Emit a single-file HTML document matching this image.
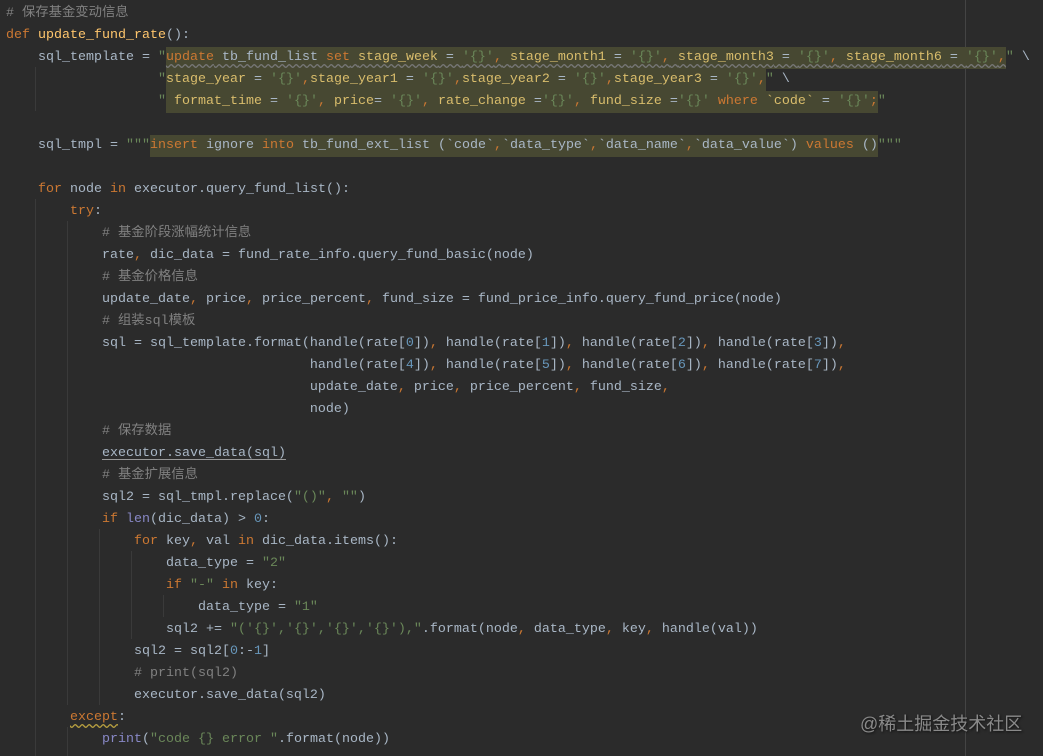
<!DOCTYPE html>
<html><head><meta charset="utf-8"><style>
html,body{margin:0;padding:0;background:#2b2b2b;width:1043px;height:756px;overflow:hidden;position:relative}
.code{position:absolute;left:6px;top:3px;font-family:"Liberation Mono","Noto Sans CJK SC",monospace;font-size:13.33px;color:#a9b7c6}
.l{height:22px;line-height:22px;white-space:pre;overflow:visible}
.k{color:#cc7832}.f{color:#ffc66d}.s{color:#6a8759}.c{color:#808080}.n{color:#6897bb}.b{color:#8888c6}
.i{background:#474832;display:inline-block;height:22px;vertical-align:top}
.y{color:#d9bd6c}
.w{text-decoration:underline wavy #777;text-underline-offset:3px}
.g{position:absolute;width:1px;background:#3a3a3a}
</style></head><body>
<div class="g" style="left:965px;top:0;height:756px;background:#444"></div>
<div class="g" style="left:35px;top:67px;height:44px"></div>
<div class="g" style="left:35px;top:199px;height:557px"></div>
<div class="g" style="left:67px;top:221px;height:484px"></div>
<div class="g" style="left:67px;top:727px;height:29px"></div>
<div class="g" style="left:99px;top:529px;height:176px"></div>
<div class="g" style="left:131px;top:551px;height:88px"></div>
<div class="g" style="left:163px;top:595px;height:22px"></div>
<div class="code"><div class="l c"># 保存基金变动信息</div><div class="l"><span class="k">def</span> <span class="f">update_fund_rate</span>():</div><div class="l">    sql_template = <span class="s">"</span><span class="i w"><span class="k">update</span> tb_fund_list <span class="k">set</span> <span class="y">stage_week</span> = <span class="s">'{}'</span><span class="k">,</span> <span class="y">stage_month1</span> = <span class="s">'{}'</span><span class="k">,</span> <span class="y">stage_month3</span> = <span class="s">'{}'</span><span class="k">,</span> <span class="y">stage_month6</span> = <span class="s">'{}'</span><span class="k">,</span></span><span class="s">"</span> \</div><div class="l">                   <span class="s">"</span><span class="i"><span class="y">stage_year</span> = <span class="s">'{}'</span><span class="k">,</span><span class="y">stage_year1</span> = <span class="s">'{}'</span><span class="k">,</span><span class="y">stage_year2</span> = <span class="s">'{}'</span><span class="k">,</span><span class="y">stage_year3</span> = <span class="s">'{}'</span><span class="k">,</span></span><span class="s">"</span> \</div><div class="l">                   <span class="s">"</span><span class="i"> <span class="y">format_time</span> = <span class="s">'{}'</span><span class="k">,</span> <span class="y">price</span>= <span class="s">'{}'</span><span class="k">,</span> <span class="y">rate_change</span> =<span class="s">'{}'</span><span class="k">,</span> <span class="y">fund_size</span> =<span class="s">'{}'</span> <span class="k">where</span> <span class="y">`code`</span> = <span class="s">'{}'</span><span class="k">;</span></span><span class="s">"</span></div><div class="l"> </div><div class="l">    sql_tmpl = <span class="s">"""</span><span class="i"><span class="k">insert</span> ignore <span class="k">into</span> tb_fund_ext_list (`code`<span class="k">,</span>`data_type`<span class="k">,</span>`data_name`<span class="k">,</span>`data_value`) <span class="k">values</span> ()</span><span class="s">"""</span></div><div class="l"> </div><div class="l">    <span class="k">for</span> node <span class="k">in</span> executor.query_fund_list():</div><div class="l">        <span class="k">try</span>:</div><div class="l c">            # 基金阶段涨幅统计信息</div><div class="l">            rate<span class="k">,</span> dic_data = fund_rate_info.query_fund_basic(node)</div><div class="l c">            # 基金价格信息</div><div class="l">            update_date<span class="k">,</span> price<span class="k">,</span> price_percent<span class="k">,</span> fund_size = fund_price_info.query_fund_price(node)</div><div class="l c">            # 组装sql模板</div><div class="l">            sql = sql_template.format(handle(rate[<span class="n">0</span>])<span class="k">,</span> handle(rate[<span class="n">1</span>])<span class="k">,</span> handle(rate[<span class="n">2</span>])<span class="k">,</span> handle(rate[<span class="n">3</span>])<span class="k">,</span></div><div class="l">                                      handle(rate[<span class="n">4</span>])<span class="k">,</span> handle(rate[<span class="n">5</span>])<span class="k">,</span> handle(rate[<span class="n">6</span>])<span class="k">,</span> handle(rate[<span class="n">7</span>])<span class="k">,</span></div><div class="l">                                      update_date<span class="k">,</span> price<span class="k">,</span> price_percent<span class="k">,</span> fund_size<span class="k">,</span></div><div class="l">                                      node)</div><div class="l c">            # 保存数据</div><div class="l">            <span style="text-decoration:underline #999;text-underline-offset:3px">executor.save_data(sql)</span></div><div class="l c">            # 基金扩展信息</div><div class="l">            sql2 = sql_tmpl.replace(<span class="s">"()"</span><span class="k">,</span> <span class="s">""</span>)</div><div class="l">            <span class="k">if</span> <span class="b">len</span>(dic_data) &gt; <span class="n">0</span>:</div><div class="l">                <span class="k">for</span> key<span class="k">,</span> val <span class="k">in</span> dic_data.items():</div><div class="l">                    data_type = <span class="s">"2"</span></div><div class="l">                    <span class="k">if</span> <span class="s">"-"</span> <span class="k">in</span> key:</div><div class="l">                        data_type = <span class="s">"1"</span></div><div class="l">                    sql2 += <span class="s">"('{}','{}','{}','{}'),"</span>.format(node<span class="k">,</span> data_type<span class="k">,</span> key<span class="k">,</span> handle(val))</div><div class="l">                sql2 = sql2[<span class="n">0</span>:-<span class="n">1</span>]</div><div class="l c">                # print(sql2)</div><div class="l">                executor.save_data(sql2)</div><div class="l">        <span class="k w" style="text-decoration-color:#b8a040">except</span>:</div><div class="l">            <span class="b">print</span>(<span class="s">"code {} error "</span>.format(node))</div></div>
<div style="position:absolute;left:860px;top:710px;font-family:'Liberation Sans','Noto Sans CJK SC',sans-serif;font-size:18px;color:#8a8a8a;text-shadow:1px 1px 2px #111">@稀土掘金技术社区</div>
</body></html>
